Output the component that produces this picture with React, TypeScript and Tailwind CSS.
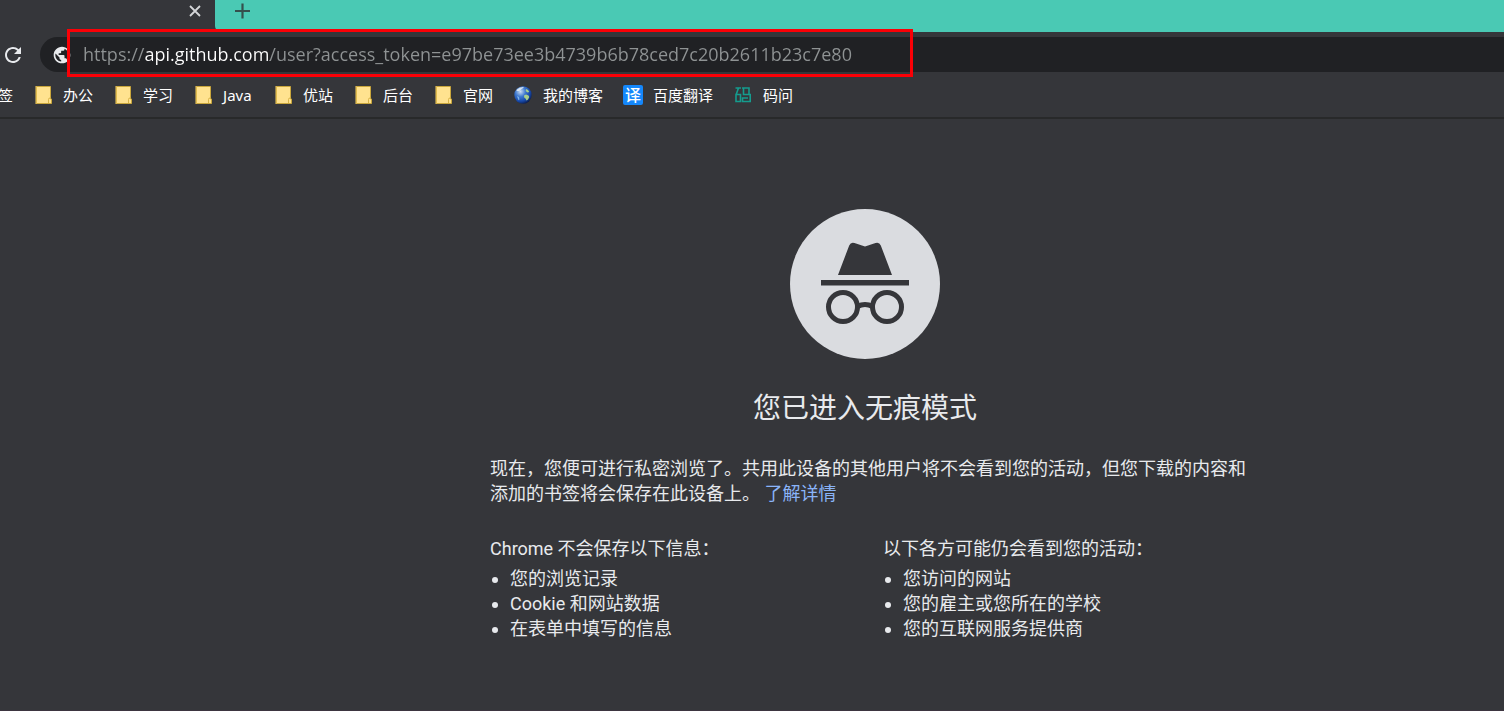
import type { ReactNode } from "react";

function Folder() {
  return (
    <svg viewBox="0 0 20 20" className="size-5" aria-hidden="true">
      <path d="M3.500 1.500h14v12.500h1v4.500h-15z" fill="#ffe28f" stroke="#c9a63c" />
      <path d="M15.500 18v-3.500q0-1.500 1.500-1.500h1" fill="none" stroke="#d8b346" />
      <path d="M3 1v18" stroke="#f7cf5c" />
    </svg>
  );
}

function Earth() {
  return (
    <svg viewBox="0 0 20 20" className="size-5" aria-hidden="true">
      <defs>
        <radialGradient id="earth" cx="0.35" cy="0.3" r="0.75">
          <stop offset="0" stopColor="#c9dcf2" />
          <stop offset="0.4" stopColor="#3d78cf" />
          <stop offset="0.75" stopColor="#1748a8" />
          <stop offset="1" stopColor="#0b1c4b" />
        </radialGradient>
      </defs>
      <circle cx="10" cy="10" r="8.700" fill="url(#earth)" />
      <path d="M4 4.500q3-3 7-2.500l-1.500 1.500-1 .5-1.500 1.500-1.500.5-2 0z" fill="#eef3f4" opacity="0.8" />
      <path d="M11 10.500l2-1 2.500 1 .8 1.500-1.300 2.500-1.500 1-.8-1.800-1.500-1.200zM13 4l2 1 1.300 2-1.800.5-1.800-1.500z" fill="#a9cf8a" />
      <path d="M4 11l2 1 .5 2.500-1 .8z" fill="#7db2e8" />
    </svg>
  );
}

function Translate() {
  return (
    <span
      className="flex size-5 items-center justify-center rounded-xs bg-[#1487fb] text-base leading-5 font-medium text-white"
      aria-hidden="true"
    >
      译
    </span>
  );
}

function CodeAsk() {
  return (
    <svg
      viewBox="0 0 20 20"
      className="size-5"
      fill="none"
      stroke="#159c8e"
      strokeWidth="1.600"
      aria-hidden="true"
    >
      <path d="M2.500 3H8M5.500 3L3.200 9.500M3 9.500H7.500V16.500H3Z" />
      <path d="M9 3H16V9.500M10.500 3V9.500H17.200V16.500H9.500V13H15" />
    </svg>
  );
}

const bookmarks: { label: string; icon: ReactNode }[] = [
  { label: "办公", icon: <Folder /> },
  { label: "学习", icon: <Folder /> },
  { label: "Java", icon: <Folder /> },
  { label: "优站", icon: <Folder /> },
  { label: "后台", icon: <Folder /> },
  { label: "官网", icon: <Folder /> },
  { label: "我的博客", icon: <Earth /> },
  { label: "百度翻译", icon: <Translate /> },
  { label: "码问", icon: <CodeAsk /> },
];

function TabStrip() {
  return (
    <div className="flex h-8">
      <div className="flex w-[215px] items-start justify-end pr-3">
        <button type="button" aria-label="关闭标签页" className="mt-[3px] flex size-4 items-center justify-center">
          <svg viewBox="0 0 16 16" className="size-4" stroke="#d5d6d9" strokeWidth="1.800">
            <path d="M3 3l10 10M13 3l-10 10" />
          </svg>
        </button>
      </div>
      <div className="flex flex-1 items-start rounded-bl-md bg-[#4ac9b4] pl-[18px]">
        <button type="button" aria-label="新建标签页" className="size-5">
          <svg viewBox="0 0 20 20" className="size-5" stroke="#35504d" strokeWidth="2.200">
            <path d="M9.500 3.500v15M2 11h15" />
          </svg>
        </button>
      </div>
    </div>
  );
}

function Toolbar() {
  return (
    <div className="relative flex h-[45px] items-center">
      <button type="button" aria-label="重新加载" className="flex w-10 items-center pl-px">
        <svg viewBox="0 0 24 24" className="size-6" fill="#e8eaed">
          <path d="M17.650 6.350A7.960 7.960 0 0 0 12 4c-4.420 0-7.990 3.580-7.990 8s3.570 8 7.990 8c3.730 0 6.840-2.550 7.730-6h-2.080A5.990 5.990 0 0 1 12 18c-3.310 0-6-2.690-6-6s2.690-6 6-6c1.660 0 3.140.69 4.220 1.780L13 11h7V4l-2.350 2.350z" />
        </svg>
      </button>
      <div className="flex h-[35px] flex-1 items-center rounded-l-full bg-[#202124] pl-3">
        <svg viewBox="0 0 24 24" className="size-5" fill="#e8eaed" aria-hidden="true">
          <path d="M12 2C6.480 2 2 6.480 2 12s4.480 10 10 10 10-4.480 10-10S17.520 2 12 2zm-1 17.930c-3.950-.49-7-3.850-7-7.930 0-.62.080-1.210.21-1.790L9 15v1c0 1.100.9 2 2 2v1.930zm6.900-2.540c-.26-.81-1-1.390-1.900-1.390h-1v-3c0-.55-.45-1-1-1H8v-2h2c.55 0 1-.45 1-1V7h2c1.100 0 2-.9 2-2v-.41c2.930 1.190 5 4.060 5 7.410 0 2.080-.8 3.970-2.100 5.390z" />
        </svg>
        <input
          type="text"
          aria-label="地址栏"
          defaultValue="https://api.github.com/user?access_token=e97be73ee3b4739b6b78ced7c20b2611b23c7e80"
          className="ml-[11px] h-[35px] min-w-0 flex-1 bg-[linear-gradient(to_right,#8f9394_61px,#ffffff_61px,#ffffff_187px,#8f9394_187px)] bg-clip-text pb-0.5 font-['Open_Sans','Noto_Sans_CJK_SC',sans-serif] text-[18px] text-transparent caret-white outline-none"
        />
      </div>
      <div className="pointer-events-none absolute -top-[3px] left-[67px] h-12 w-[846px] border-3 border-[#fb0006]" />
    </div>
  );
}

function BookmarksBar() {
  return (
    <nav
      aria-label="书签栏"
      className="flex h-[42px] items-center gap-5 overflow-hidden border-b-2 border-[#28292a] pb-[5px] font-['Noto_Sans','Noto_Sans_CJK_SC',sans-serif] text-[15px] leading-5 whitespace-nowrap text-white"
    >
      <a href="#bookmark" className="flex w-[13px] shrink-0 justify-end">
        签
      </a>
      {bookmarks.map((b) => (
        <a
          key={b.label}
          href={"#" + b.label}
          className="flex min-w-[60px] shrink-0 items-center gap-[10px]"
        >
          {b.icon}
          {b.label}
        </a>
      ))}
    </nav>
  );
}

function IncognitoMark() {
  return (
    <svg viewBox="0 0 150 150" className="size-[150px]" aria-hidden="true">
      <circle cx="75" cy="75" r="75" fill="#dadce0" />
      <g fill="#35363a">
        <path d="M48 66L59.200 36.500Q60.800 32.600 64.500 34L75 37.500L85.500 34Q89.200 32.600 90.800 36.500L102 66Z" />
        <path d="M31 71h88v5.500H31z" />
      </g>
      <g fill="none" stroke="#35363a" strokeWidth="5">
        <circle cx="53" cy="98" r="14.500" />
        <circle cx="97" cy="98" r="14.500" />
        <path d="M67.500 97.500q7.500-4 15 0" />
      </g>
    </svg>
  );
}

function InfoList({ title, items }: { title: string; items: string[] }) {
  return (
    <section>
      <h2>{title}</h2>
      <ul className="mt-[5px] list-disc pl-5">
        {items.map((item) => (
          <li key={item}>{item}</li>
        ))}
      </ul>
    </section>
  );
}

export default function App() {
  return (
    <div className="flex min-h-screen flex-col bg-[#35363a] font-[Roboto,'Noto_Sans_CJK_SC',sans-serif]">
      <TabStrip />
      <Toolbar />
      <BookmarksBar />
      <main className="flex flex-1 justify-center border-b border-[#3d3540] pt-[90px] pl-[226px] text-[18px] leading-[25px] text-[#e8eaed]">
        <div className="flex w-full max-w-[750px] flex-col">
          <div className="self-center">
            <IncognitoMark />
          </div>
          <h1 className="mt-[30px] text-center text-[28px] leading-10">您已进入无痕模式</h1>
          <p className="mt-[27px] -mr-2">
            现在，您便可进行私密浏览了。共用此设备的其他用户将不会看到您的活动，但您下载的内容和添加的书签将会保存在此设备上。{" "}
            <a href="#learn-more" className="text-[#8ab4f8]">
              了解详情
            </a>
          </p>
          <div className="mt-[30px] grid grid-cols-2 gap-9">
            <InfoList
              title="Chrome 不会保存以下信息："
              items={["您的浏览记录", "Cookie 和网站数据", "在表单中填写的信息"]}
            />
            <InfoList
              title="以下各方可能仍会看到您的活动："
              items={["您访问的网站", "您的雇主或您所在的学校", "您的互联网服务提供商"]}
            />
          </div>
        </div>
      </main>
    </div>
  );
}
